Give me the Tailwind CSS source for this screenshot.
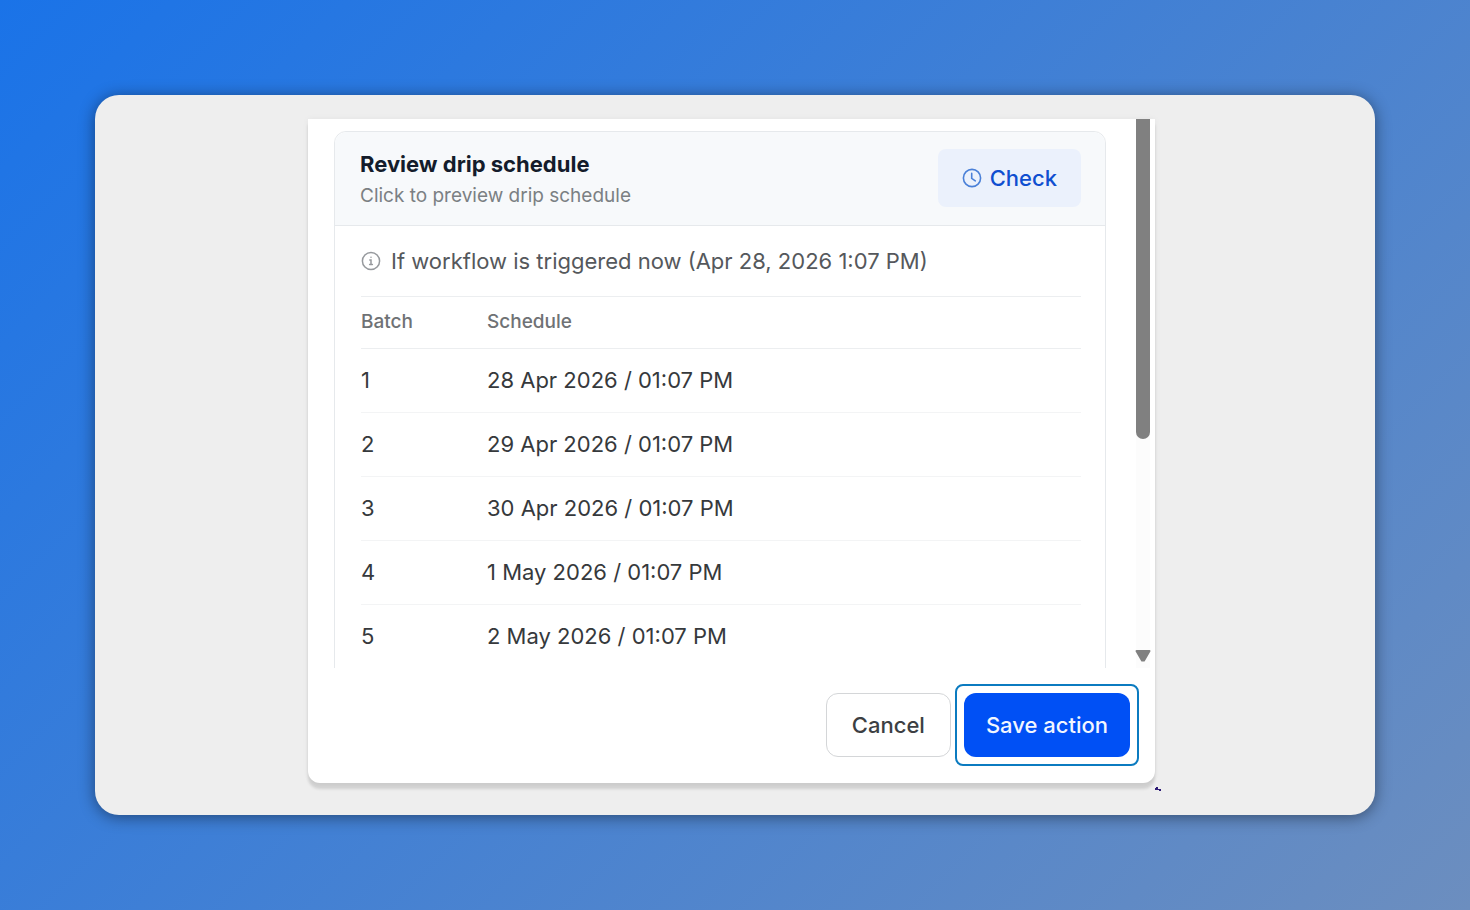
<!DOCTYPE html>
<html lang="en">
<head>
    <meta charset="UTF-8">
    <meta name="viewport" content="width=device-width, initial-scale=1.0">
    <title>Review drip schedule</title>
    <script src="https://cdn.jsdelivr.net/npm/@tailwindcss/browser@4"></script>
</head>
<body class="min-h-screen flex flex-col p-[95px] bg-linear-[135deg] from-[#1a73e8] to-[#6c8ebf] font-['Inter',sans-serif]">
    <main class="grow flex justify-center rounded-3xl bg-[#eeeeee] pt-6 pb-8 pr-[7px] shadow-[0_2px_16px_rgba(0,0,0,0.45)]">
        <!-- Panel -->
        <div class="relative flex flex-col w-full max-w-[847px] rounded-b-xl bg-white shadow-[0_6px_3px_rgba(0,0,0,0.12),0_0_6px_rgba(0,0,0,0.05)]">
            <div class="flex h-[549px] overflow-hidden">
                <!-- Schedule card -->
                <section class="grow self-start ml-[26px] mr-[30px] mt-3 rounded-t-xl border border-[#e6e9ec]">
                    <div class="flex items-start justify-between rounded-t-xl border-b border-[#e6e9ec] bg-[#f7f9fb] h-[94px] pt-[17px] pl-[25px] pr-6">
                        <div>
                            <h2 class="text-[22px] leading-[31px] font-bold text-[#141c2b]">Review drip schedule</h2>
                            <p class="text-[19px] leading-[31px] text-[#7b8083]">Click to preview drip schedule</p>
                        </div>
                        <button type="button" class="flex items-center gap-2 h-[58px] px-6 rounded-lg bg-[#ebf1fc] text-[22px] font-medium text-[#0f4fd0]">
                            <svg class="size-5" viewBox="0 0 20 20" fill="none" stroke="#4a80d8" stroke-width="1.6" stroke-linecap="round" stroke-linejoin="round">
                                <circle cx="10" cy="10" r="8.6"/>
                                <path d="M9.7 5.4v5l3.6 2.4"/>
                            </svg>
                            Check
                        </button>
                    </div>

                    <div class="pl-[26px] pr-6">
                        <p class="flex items-center gap-[10px] h-[70px] text-[22px] text-[#55585c]">
                            <svg class="size-5" viewBox="0 0 20 20" fill="none" stroke="#96999d" stroke-width="1.5" stroke-linecap="round">
                                <circle cx="10" cy="10" r="8.6"/>
                                <path d="M8.8 9h1.2v4.6M8.6 13.6h2.8M10 6.2v.1"/>
                            </svg>
                            If workflow is triggered now (Apr 28, 2026 1:07 PM)
                        </p>
                        <table class="w-full text-left text-[22px] text-[#36393c]">
                            <thead>
                                <tr class="h-[52px] border-y border-[#eceef0] text-[19px] text-[#6f7275]">
                                    <th class="w-[126px] font-medium">Batch</th>
                                    <th class="font-medium">Schedule</th>
                                </tr>
                            </thead>
                            <tbody>
                                <tr class="h-16 border-b border-[#f3f4f5]"><td>1</td><td>28 Apr 2026 / 01:07 PM</td></tr>
                                <tr class="h-16 border-b border-[#f3f4f5]"><td>2</td><td>29 Apr 2026 / 01:07 PM</td></tr>
                                <tr class="h-16 border-b border-[#f3f4f5]"><td>3</td><td>30 Apr 2026 / 01:07 PM</td></tr>
                                <tr class="h-16 border-b border-[#f3f4f5]"><td>4</td><td>1 May 2026 / 01:07 PM</td></tr>
                                <tr class="h-16"><td>5</td><td>2 May 2026 / 01:07 PM</td></tr>
                            </tbody>
                        </table>
                    </div>
                </section>

                <!-- Scrollbar -->
                <div class="flex flex-col justify-between items-center w-[14px] mr-[5px] bg-[#fcfcfc]">
                    <div class="w-full h-80 rounded-b-full bg-[#808080]"></div>
                    <svg class="w-4 h-3 mb-[6px] shrink-0" viewBox="0 0 16 12" fill="#808080" stroke="#808080" stroke-width="2" stroke-linejoin="round">
                        <path d="M1.5 1h13L9 10.5H7z"/>
                    </svg>
                </div>
            </div>

            <!-- Footer buttons -->
            <div class="flex items-center justify-end gap-1 h-[114px] pr-4">
                <button type="button" class="h-16 px-[25px] rounded-xl border border-[#d4d6d8] text-[22px] font-medium text-[#3c3f43]">Cancel</button>
                <div class="rounded-lg border-2 border-[#0b7bc0] p-[7px]">
                    <button type="button" class="block h-16 px-[22px] rounded-xl bg-[#0050f5] text-[22px] font-medium text-[#f2f6ff]">Save action</button>
                </div>
            </div>

            <svg class="absolute -right-[6px] -bottom-2 w-[6px] h-1" viewBox="0 0 6 4" fill="#2d1b75">
                <path d="M1 0h2v2h3v2H4V3H0V1h1z"/>
            </svg>
        </div>
    </main>
</body>
</html>
